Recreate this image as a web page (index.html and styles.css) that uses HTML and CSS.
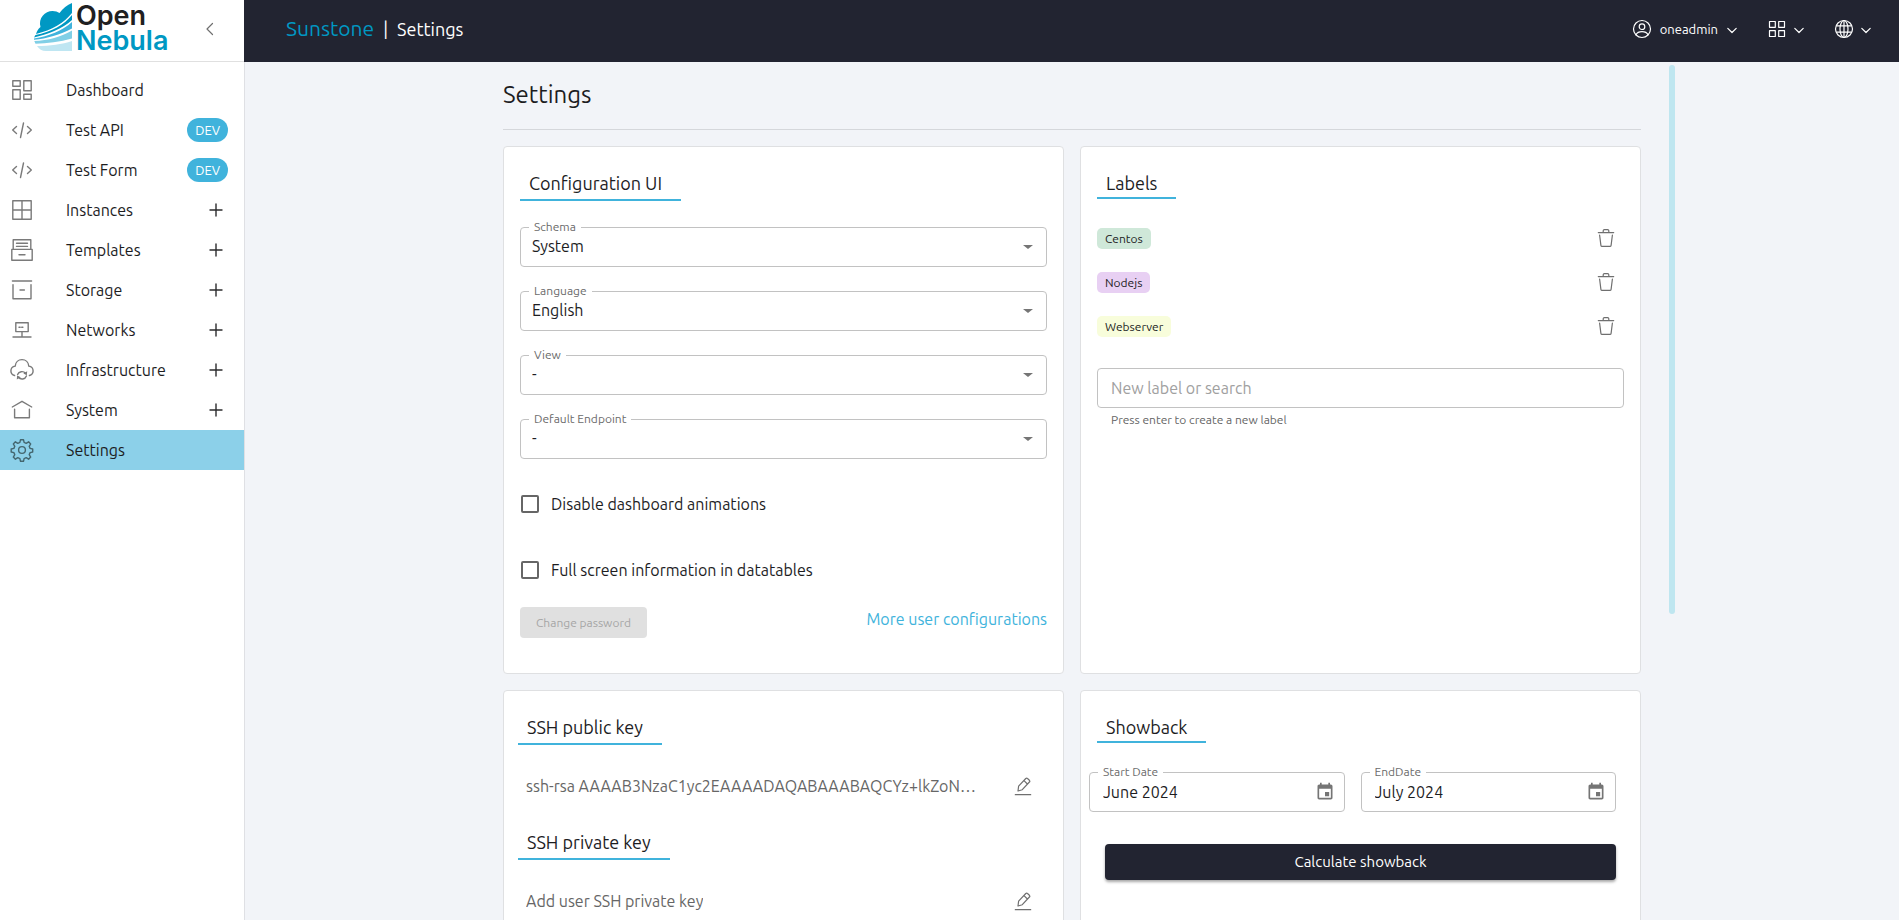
FILE: index.html
```html
<!DOCTYPE html>
<html lang="en">
<head>
<meta charset="utf-8">
<title>Sunstone | Settings</title>
<link rel="stylesheet" href="styles.css">
</head>
<body>
<svg class="sprite" aria-hidden="true">
  <symbol id="i-dashboard" viewBox="0 0 24 24"><path d="M2.8 2.8h7.4v5.4H2.8zM2.8 11.8h7.4v9.4H2.8zM13.8 2.8h7.4v9.9h-7.4zM13.8 16.3h7.4v4.9h-7.4z"/></symbol>
  <symbol id="i-code" viewBox="0 0 24 24"><path d="M13.5 5 10.5 19.5M6.5 8.5 2.7 12l3.8 3.5M17.5 8.5l3.8 3.5-3.8 3.5"/></symbol>
  <symbol id="i-window" viewBox="0 0 24 24"><path d="M2.8 2.8h18.4v18.4H2.8zM12 2.8v18.4M2.8 12h18.4"/></symbol>
  <symbol id="i-archive" viewBox="0 0 24 24"><path d="M3.2 11.3V1.8h17.6v9.5M1.8 11.4h20.4v10.8H1.8zM6.500 5.300h11M6.500 8.400h11M9 16.800h6"/></symbol>
  <symbol id="i-box" viewBox="0 0 24 24"><path d="M2.4 3h19.2M3 6.6v14.2h18V6.6M10 12h4.4"/></symbol>
  <symbol id="i-network" viewBox="0 0 24 24"><path d="M5.8 4.8h12.4v8.8H5.8zM12 13.6v5.4M3 19h18M9 9.2h1.2M11.7 9.2h1.2"/></symbol>
  <symbol id="i-cloud" viewBox="0 0 24 24"><path d="M4.600 17.500C2.300 16.900.9 15.200.9 13c0-2.600 1.900-4.600 4.300-4.900C5.500 4.200 8.300 1.600 12 1.600s6.500 2.600 6.800 6.500c2.400.3 4.300 2.300 4.300 4.900 0 2.200-1.400 3.900-3.700 4.500M7.600 16.600c1.200-3.300 5.800-3.900 7.800-1.300M16.400 18c-1.200 3.400-5.800 4-7.900 1.300"/><path class="solid" d="m17.200 13.200-.4 4-3.500-1.800zM6.800 21.600l.3-4 3.600 1.700z"/></symbol>
  <symbol id="i-home" viewBox="0 0 24 24"><path d="M2.300 9 12 3.300 21.700 9M4.600 11.300v8.500h14.800v-8.500"/></symbol>
  <symbol id="i-gear" viewBox="0 0 24 24"><circle cx="12" cy="12" r="3.400"/><path d="M10.500 1.700h3l.6 2.700 2.100.9 2.400-1.500 2.100 2.100-1.500 2.400.9 2.100 2.600.6v3l-2.600.6-.9 2.100 1.500 2.400-2.100 2.100-2.400-1.500-2.100.9-.6 2.700h-3l-.6-2.700-2.100-.9-2.400 1.500-2.100-2.100 1.500-2.400-.9-2.100-2.700-.6v-3l2.700-.6.9-2.100-1.500-2.400 2.100-2.100 2.400 1.500 2.100-.9z"/></symbol>
  <symbol id="i-plus" viewBox="0 0 16 16"><path d="M8 2v12M2 8h12"/></symbol>
  <symbol id="i-left" viewBox="0 0 16 16"><path d="M10.500 2.500 5 8l5.500 5.500"/></symbol>
  <symbol id="i-down" viewBox="0 0 12 12"><path d="M1.800 4.300 6 8.500l4.200-4.200"/></symbol>
  <symbol id="i-user" viewBox="0 0 20 20"><circle cx="10" cy="10" r="8.500"/><circle cx="10" cy="7.700" r="2.800"/><path d="M4 15.800c1.200-2.500 3.400-3.100 6-3.100s4.800.6 6 3.100"/></symbol>
  <symbol id="i-grid" viewBox="0 0 20 20"><path d="M2.500 2.500h5.800v5.800H2.500zM11.700 2.500h5.800v5.800h-5.800zM2.500 11.700h5.800v5.800H2.500zM11.700 11.700h5.800v5.800h-5.800z"/></symbol>
  <symbol id="i-globe" viewBox="0 0 20 20"><circle cx="10" cy="10" r="8.500"/><ellipse cx="10" cy="10" rx="4" ry="8.500"/><path d="M10 1.500v17M2.600 6.800h14.800M2.600 13.200h14.800"/></symbol>
  <symbol id="i-trash" viewBox="0 0 20 20"><path d="M2.300 4.600h15.400M7.200 4.400V2.800c0-.7.500-1.200 1.200-1.200h3.200c.7 0 1.200.5 1.200 1.200v1.600M3.600 7l1.300 10.300c.1.700.6 1.100 1.200 1.100h7.800c.6 0 1.100-.4 1.200-1.100L16.400 7"/></symbol>
  <symbol id="i-edit" viewBox="0 0 20 20"><path d="M2.300 18.700h15.400M5 15l.6-4.800 7.200-7.700c.5-.5 1.200-.5 1.700 0l1.900 1.800c.5.500.5 1.200 0 1.700L9.300 13.700zM11 4.600l3.400 3.400"/></symbol>
  <symbol id="i-calendar" viewBox="0 0 24 24"><path class="solid" d="M17 12h-5v5h5v-5zM16 1v2H8V1H6v2H5c-1.110 0-1.990.9-1.990 2L3 19c0 1.100.89 2 2 2h14c1.100 0 2-.9 2-2V5c0-1.100-.9-2-2-2h-1V1h-2zm3 18H5V8h14v11z"/></symbol>
</svg>

<div class="app">
  <aside class="sidebar">
    <div class="brand">
      <a class="logo" href="#" aria-label="OpenNebula">
        <svg class="logo-mark" viewBox="0 0 38 48" aria-hidden="true">
          <path fill="#0098c3" d="M38 0v10C30 20 18 27 2 31c1-3 2-5 4.500-7C4 15 11 8 18.500 8c3 0 5 .8 7 2 3.500-4.500 7.500-8 12.500-10z"/>
          <path fill="#0098c3" d="M38 12v5C28 26 15 31 0 34.500L1.500 32C17 29 30 22 38 12z"/>
          <path fill="#40b3dc" d="M38 19v6.500C26 32 13 35.500 0 36.800L0 35.500C15 33 28 28 38 19z"/>
          <path fill="#80cfe6" d="M38 27.500v8C26 39 13 40.500 1.500 40.800L.3 38C14 37.500 27 34 38 27.500z"/>
          <path fill="#bfe6f2" d="M38 38v10H12c-4 0-7-2-9-5 13 0 25-1.500 35-5z"/>
        </svg>
        <span class="logo-text"><span>Open</span><span class="logo-accent">Nebula</span></span>
      </a>
      <button class="icon-btn collapse" type="button" aria-label="Collapse menu"><svg class="icon s16"><use href="#i-left"/></svg></button>
    </div>
    <nav class="nav">
      <a class="nav-item" href="#"><svg class="icon s24"><use href="#i-dashboard"/></svg><span>Dashboard</span></a>
      <a class="nav-item" href="#"><svg class="icon s24"><use href="#i-code"/></svg><span>Test API</span><span class="badge">DEV</span></a>
      <a class="nav-item" href="#"><svg class="icon s24"><use href="#i-code"/></svg><span>Test Form</span><span class="badge">DEV</span></a>
      <a class="nav-item" href="#"><svg class="icon s24"><use href="#i-window"/></svg><span>Instances</span><svg class="icon s16 plus"><use href="#i-plus"/></svg></a>
      <a class="nav-item" href="#"><svg class="icon s24"><use href="#i-archive"/></svg><span>Templates</span><svg class="icon s16 plus"><use href="#i-plus"/></svg></a>
      <a class="nav-item" href="#"><svg class="icon s24"><use href="#i-box"/></svg><span>Storage</span><svg class="icon s16 plus"><use href="#i-plus"/></svg></a>
      <a class="nav-item" href="#"><svg class="icon s24"><use href="#i-network"/></svg><span>Networks</span><svg class="icon s16 plus"><use href="#i-plus"/></svg></a>
      <a class="nav-item" href="#"><svg class="icon s24"><use href="#i-cloud"/></svg><span>Infrastructure</span><svg class="icon s16 plus"><use href="#i-plus"/></svg></a>
      <a class="nav-item" href="#"><svg class="icon s24"><use href="#i-home"/></svg><span>System</span><svg class="icon s16 plus"><use href="#i-plus"/></svg></a>
      <a class="nav-item active" href="#" aria-current="page"><svg class="icon s24"><use href="#i-gear"/></svg><span>Settings</span></a>
    </nav>
  </aside>

  <div class="page">
    <header class="topbar">
      <div class="crumbs"><span class="product">Sunstone</span><span>|</span><span>Settings</span></div>
      <div class="tools">
        <button class="tool user" type="button"><svg class="icon s20"><use href="#i-user"/></svg><span>oneadmin</span><svg class="icon s12"><use href="#i-down"/></svg></button>
        <button class="tool" type="button" aria-label="Views"><svg class="icon s20"><use href="#i-grid"/></svg><svg class="icon s12"><use href="#i-down"/></svg></button>
        <button class="tool" type="button" aria-label="Zone"><svg class="icon s20"><use href="#i-globe"/></svg><svg class="icon s12"><use href="#i-down"/></svg></button>
      </div>
    </header>

    <main class="main">
      <div class="container">
        <h1 class="page-title">Settings</h1>
        <div class="cards">
          <section class="card">
            <h2 class="card-title tall">Configuration UI</h2>
            <div class="fields">
              <div class="field"><label for="schema">Schema</label><select id="schema"><option>System</option></select></div>
              <div class="field"><label for="language">Language</label><select id="language"><option>English</option></select></div>
              <div class="field"><label for="view">View</label><select id="view"><option>-</option></select></div>
              <div class="field"><label for="endpoint">Default Endpoint</label><select id="endpoint"><option>-</option></select></div>
            </div>
            <div class="checks">
              <label class="check"><input type="checkbox">Disable dashboard animations</label>
              <label class="check"><input type="checkbox">Full screen information in datatables</label>
            </div>
            <div class="actions">
              <button class="btn-disabled" type="button" disabled>Change password</button>
              <a class="link" href="#">More user configurations</a>
            </div>
          </section>

          <section class="card">
            <h2 class="card-title">Labels</h2>
            <ul class="labels">
              <li><span class="chip green">Centos</span><button class="icon-btn" type="button" aria-label="Delete Centos"><svg class="icon s20"><use href="#i-trash"/></svg></button></li>
              <li><span class="chip purple">Nodejs</span><button class="icon-btn" type="button" aria-label="Delete Nodejs"><svg class="icon s20"><use href="#i-trash"/></svg></button></li>
              <li><span class="chip yellow">Webserver</span><button class="icon-btn" type="button" aria-label="Delete Webserver"><svg class="icon s20"><use href="#i-trash"/></svg></button></li>
            </ul>
            <input class="text-input" type="text" placeholder="New label or search" aria-label="New label or search" aria-describedby="label-help">
            <p class="helper" id="label-help">Press enter to create a new label</p>
          </section>

          <section class="card ssh">
            <h2 class="card-title tall">SSH public key</h2>
            <div class="key-row"><span class="key">ssh-rsa AAAAB3NzaC1yc2EAAAADAQABAAABAQCYz+lkZoN…</span><button class="icon-btn" type="button" aria-label="Edit public key"><svg class="icon s20"><use href="#i-edit"/></svg></button></div>
            <h2 class="card-title tall">SSH private key</h2>
            <div class="key-row"><span class="key">Add user SSH private key</span><button class="icon-btn" type="button" aria-label="Edit private key"><svg class="icon s20"><use href="#i-edit"/></svg></button></div>
          </section>

          <section class="card">
            <h2 class="card-title">Showback</h2>
            <div class="showback">
              <div class="dates">
                <div class="field"><label for="start">Start Date</label><input id="start" type="text" value="June 2024"><button class="icon-btn cal" type="button" aria-label="Choose start date"><svg class="icon s20"><use href="#i-calendar"/></svg></button></div>
                <div class="field"><label for="end">EndDate</label><input id="end" type="text" value="July 2024"><button class="icon-btn cal" type="button" aria-label="Choose end date"><svg class="icon s20"><use href="#i-calendar"/></svg></button></div>
              </div>
              <button class="btn-primary" type="button">Calculate showback</button>
            </div>
          </section>
        </div>
        <div class="thumb"></div>
      </div>
    </main>
  </div>
</div>
</body>
</html>
```
FILE: styles.css
```css
* { box-sizing: border-box; }

body {
  margin: 0;
  height: 100vh;
  overflow: hidden;
  background: #f2f4f8;
  color: #1d1d1f;
  font: 16px/24px Ubuntu, "Noto Sans", sans-serif;
}

button, input, select { font: inherit; color: inherit; }
button { cursor: pointer; }
a { color: inherit; text-decoration: none; }
h1, h2, p, ul { margin: 0; padding: 0; font-weight: 400; }

.sprite { position: absolute; width: 0; height: 0; }
.icon {
  flex: none;
  display: block;
  fill: none;
  stroke: currentColor;
  stroke-width: 1.4;
  stroke-linecap: round;
  stroke-linejoin: round;
}
.solid { fill: currentColor; stroke: none; }
.s12 { width: 12px; height: 12px; }
.s16 { width: 16px; height: 16px; }
.s20 { width: 20px; height: 20px; }
.s24 { width: 24px; height: 24px; }
.icon-btn {
  display: flex;
  flex: none;
  padding: 0;
  border: 0;
  background: none;
  color: #6f6f6f;
}
.icon-btn .icon { stroke-width: 1.2; }

.app { display: flex; height: 100%; }

/* Sidebar */
.sidebar {
  flex: none;
  width: 245px;
  background: #fff;
  border-right: 1px solid #dfe0e4;
}
.brand {
  display: flex;
  align-items: center;
  justify-content: space-between;
  height: 62px;
  padding: 0 26px 6px 34px;
  border-bottom: 1px solid #e0e0e0;
}
.logo { display: flex; gap: 4px; }
.logo-mark { width: 38px; height: 48px; }
.logo-text {
  display: flex;
  flex-direction: column;
  font: 600 27px/25px Inter, sans-serif;
  color: #1f2021;
}
.logo-accent { color: #0098c3; }
.collapse { padding-top: 3px; }

.nav { padding: 8px 0; }
.nav-item {
  display: flex;
  align-items: center;
  height: 40px;
  padding: 0 16px 0 10px;
}
.nav-item > .s24 { margin-right: 32px; color: #7a7a7a; }
.nav-item .plus { margin: 0 4px 0 auto; color: #2c2c2e; }
.nav-item.active { background: #8cd0e9; }
.nav-item.active > .s24 { color: #44666f; }
.badge {
  margin-left: auto;
  padding: 0 8px;
  border-radius: 12px;
  background: #40b3dc;
  color: #fff;
  font-size: 13px;
}

/* Top bar */
.page { flex: 1; min-width: 0; display: flex; flex-direction: column; }
.topbar {
  position: relative;
  flex: none;
  display: flex;
  align-items: center;
  justify-content: space-between;
  height: 62px;
  margin-left: -1px;
  padding: 0 27px 4px 42px;
  background: #222431;
  color: #fff;
}
.crumbs { display: flex; align-items: baseline; gap: 9px; padding-bottom: 2px; font-size: 18px; }
.product { color: #0098c3; font-size: 21px; }
.tools { display: flex; gap: 29px; }
.tool {
  display: flex;
  align-items: center;
  gap: 6px;
  padding: 0;
  border: 0;
  background: none;
  font-size: 13px;
}
.tool.user { gap: 8px; }
.tool .icon { stroke-width: 1.2; }
.tool .s12 { margin-top: 2px; }

/* Content */
.main { flex: 1; min-height: 0; overflow: hidden; }
.container {
  position: relative;
  max-width: 1202px;
  height: 100%;
  margin: 0 auto;
  padding: 17px 32px 0;
}
.page-title {
  padding-bottom: 18px;
  border-bottom: 1px solid #d5d7db;
  font-size: 24px;
  line-height: 32px;
}
.thumb {
  position: absolute;
  top: 3px;
  right: -2px;
  width: 6px;
  height: 64%;
  border-radius: 3px;
  background: #bfe6f0;
}
.cards {
  display: grid;
  grid-template-columns: 1fr 1fr;
  gap: 16px;
  margin-top: 16px;
}
.card {
  min-width: 0;
  padding: 16px;
  border: 1px solid #dfe0e2;
  border-radius: 4px;
  background: #fff;
}
.card-title {
  width: fit-content;
  padding: 8px 19px 2px 9px;
  border-bottom: 2px solid #40b3dc;
  font-size: 18px;
  line-height: 24px;
}
.card-title.tall { padding-bottom: 4px; }

.fields { display: grid; gap: 24px; margin-top: 26px; }
.field { position: relative; display: flex; align-items: center; min-width: 0; }
.field label {
  position: absolute;
  top: -8px;
  left: 9px;
  padding: 0 5px;
  background: #fff;
  color: #6b6b6b;
  font-size: 12px;
  line-height: 16px;
}
.field select, .field input, .text-input {
  width: 100%;
  height: 40px;
  padding: 0 32px 0 11px;
  border: 1px solid #c2c2c2;
  border-radius: 4px;
  background: #fff;
  appearance: none;
}
.field select { padding-bottom: 2px; }
.field:has(select)::after {
  content: "";
  position: absolute;
  right: 14px;
  border: 5px solid transparent;
  border-top: 4px solid #757575;
  border-bottom: 0;
}

.checks { display: grid; gap: 42px; margin-top: 33px; }
.check { display: flex; align-items: center; gap: 12px; padding-left: 1px; }
.check input {
  appearance: none;
  width: 18px;
  height: 18px;
  margin: 0;
  border: 2px solid #666;
  border-radius: 2px;
}
.actions {
  display: flex;
  justify-content: space-between;
  align-items: flex-start;
  margin: 25px 0 19px;
}
.btn-disabled {
  padding: 4px 16px 3px;
  border: 0;
  border-radius: 4px;
  background: #e0e0e0;
  color: #a6a6a6;
  font-size: 12px;
}
.link { color: #40b3dc; }

.labels {
  display: grid;
  gap: 20px;
  margin: 27px 8px 30px 0;
  list-style: none;
}
.labels li { display: flex; justify-content: space-between; align-items: center; height: 24px; }
.chip {
  padding: 3px 8px 2px;
  border-radius: 5px;
  font-size: 12px;
  line-height: 16px;
}
.green { background: #cfe8d9; }
.purple { background: #e8d0f3; }
.yellow { background: #f8fddb; }
.text-input { display: block; padding: 0 13px; }
.text-input::placeholder { color: #a0a0a0; }
.helper { padding: 4px 14px; color: #666; font-size: 12px; line-height: 16px; }

.ssh { padding-left: 14px; }
.key-row {
  display: flex;
  align-items: center;
  justify-content: space-between;
  gap: 24px;
  height: 42px;
  margin: 20px 14px 15px 8px;
  color: #666;
}
.key { overflow: hidden; white-space: nowrap; text-overflow: ellipsis; }

.showback { display: grid; gap: 32px; margin: 29px 8px 0 -8px; }
.dates { display: grid; grid-template-columns: 1fr 1fr; gap: 16px; }
.dates .field input { padding-left: 13px; }
.cal { position: absolute; right: 10px; color: #757575; }
.btn-primary {
  height: 36px;
  margin-left: 16px;
  border: 0;
  border-radius: 4px;
  background: #222431;
  color: #fff;
  font-size: 15px;
  box-shadow: 0 2px 3px rgba(0, 0, 0, .35);
}
```
